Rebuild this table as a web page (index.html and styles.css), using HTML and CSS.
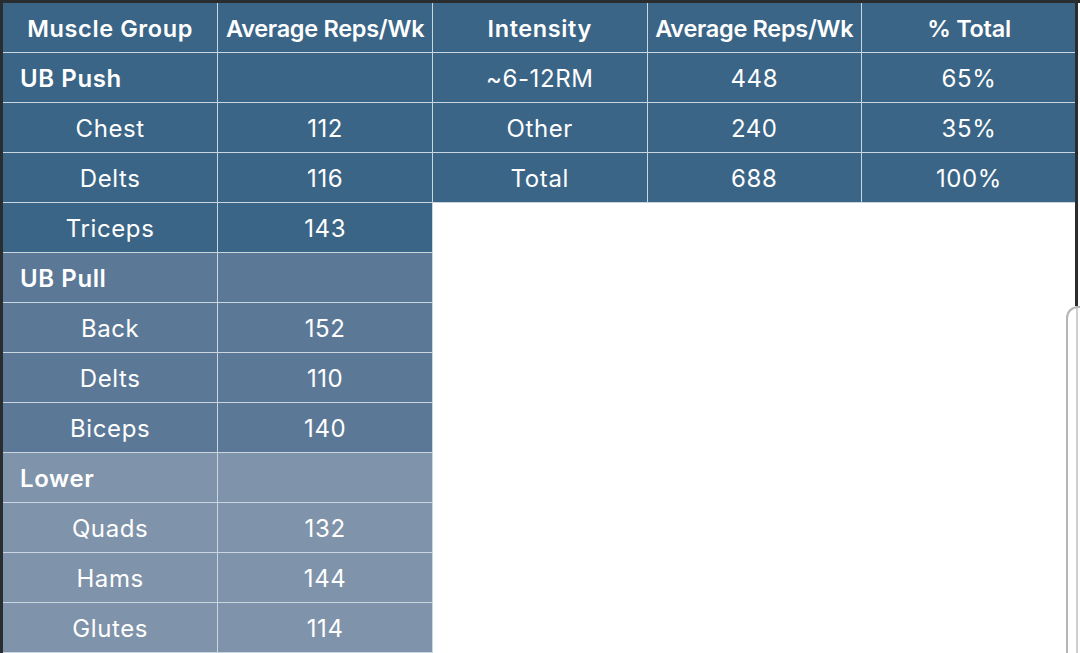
FILE: index.html
```html
<!DOCTYPE html>
<html>
<head>
<meta charset="utf-8">
<link rel="stylesheet" href="styles.css">
</head>
<body>
<div class="frame">
  <table class="tbl left">
    <tr class="head"><th>Muscle Group</th><th>Average Reps/Wk</th></tr>
    <tr class="g1"><td class="grp">UB Push</td><td></td></tr>
    <tr class="g1"><td>Chest</td><td>112</td></tr>
    <tr class="g1"><td>Delts</td><td>116</td></tr>
    <tr class="g1"><td>Triceps</td><td>143</td></tr>
    <tr class="g2"><td class="grp">UB Pull</td><td></td></tr>
    <tr class="g2"><td>Back</td><td>152</td></tr>
    <tr class="g2"><td>Delts</td><td>110</td></tr>
    <tr class="g2"><td>Biceps</td><td>140</td></tr>
    <tr class="g3"><td class="grp">Lower</td><td></td></tr>
    <tr class="g3"><td>Quads</td><td>132</td></tr>
    <tr class="g3"><td>Hams</td><td>144</td></tr>
    <tr class="g3"><td>Glutes</td><td>114</td></tr>
  </table>
  <table class="tbl right">
    <tr class="head"><th>Intensity</th><th>Average Reps/Wk</th><th>% Total</th></tr>
    <tr class="g1"><td>~6-12RM</td><td>448</td><td>65%</td></tr>
    <tr class="g1"><td>Other</td><td>240</td><td>35%</td></tr>
    <tr class="g1"><td>Total</td><td>688</td><td>100%</td></tr>
  </table>
  <div class="edge-dark"></div>
  <div class="edge-light"></div>
  <div class="edge-curve"></div>
</div>
</body>
</html>
```
FILE: styles.css
```css
html, body {
  margin: 0;
  padding: 0;
  background: #ffffff;
}
body {
  width: 1080px;
  height: 653px;
  overflow: hidden;
  font-family: "Inter", "Noto Sans", sans-serif;
}
.frame {
  position: relative;
  display: flex;
  align-items: flex-start;
  border-top: 3px solid #2a2d30;
  border-left: 3px solid #2a2d30;
  height: 650px;
}
.tbl {
  border-collapse: collapse;
  table-layout: fixed;
  color: #ffffff;
}
.tbl.left { width: 430px; }
.tbl.right { width: 644px; margin-left: -1px; }
.tbl th, .tbl td {
  height: 50px;
  padding: 0;
  padding-top: 2px;
  border: 1px solid #c9d5df;
  text-align: center;
  font-size: 24px;
  font-weight: 400;
  letter-spacing: 0.6px;
  white-space: nowrap;
  box-sizing: border-box;
}
.tbl tr:first-child th { border-top: none; height: 49px; }
.tbl.left th:first-child, .tbl.left td:first-child { border-left: none; }
.tbl.right th:last-child, .tbl.right td:last-child { border-right: none; }
.tbl th {
  font-weight: 600;
  font-size: 23.5px;
  letter-spacing: -0.3px;
}
.tbl th:first-child { letter-spacing: 0.6px; }
.tbl .grp {
  text-align: left;
  padding-left: 17px;
  font-weight: 600;
  letter-spacing: 0.6px;
}
.head, .g1 { background: #3a6586; }
.g2 { background: #5b7997; }
.g3 { background: #7f93aa; }
.edge-dark {
  position: absolute;
  top: -3px;
  left: 1072px;
  width: 3px;
  height: 306px;
  background: #2a2d30;
}
.edge-light {
  position: absolute;
  top: 303px;
  left: 1073px;
  width: 2px;
  height: 350px;
  background: #cfcfcf;
}
.edge-curve {
  position: absolute;
  top: 303px;
  left: 1063px;
  width: 14px;
  height: 360px;
  border-left: 2px solid #b5b5b5;
  border-top: 2px solid #b5b5b5;
  border-top-left-radius: 12px;
  box-sizing: border-box;
}
```
